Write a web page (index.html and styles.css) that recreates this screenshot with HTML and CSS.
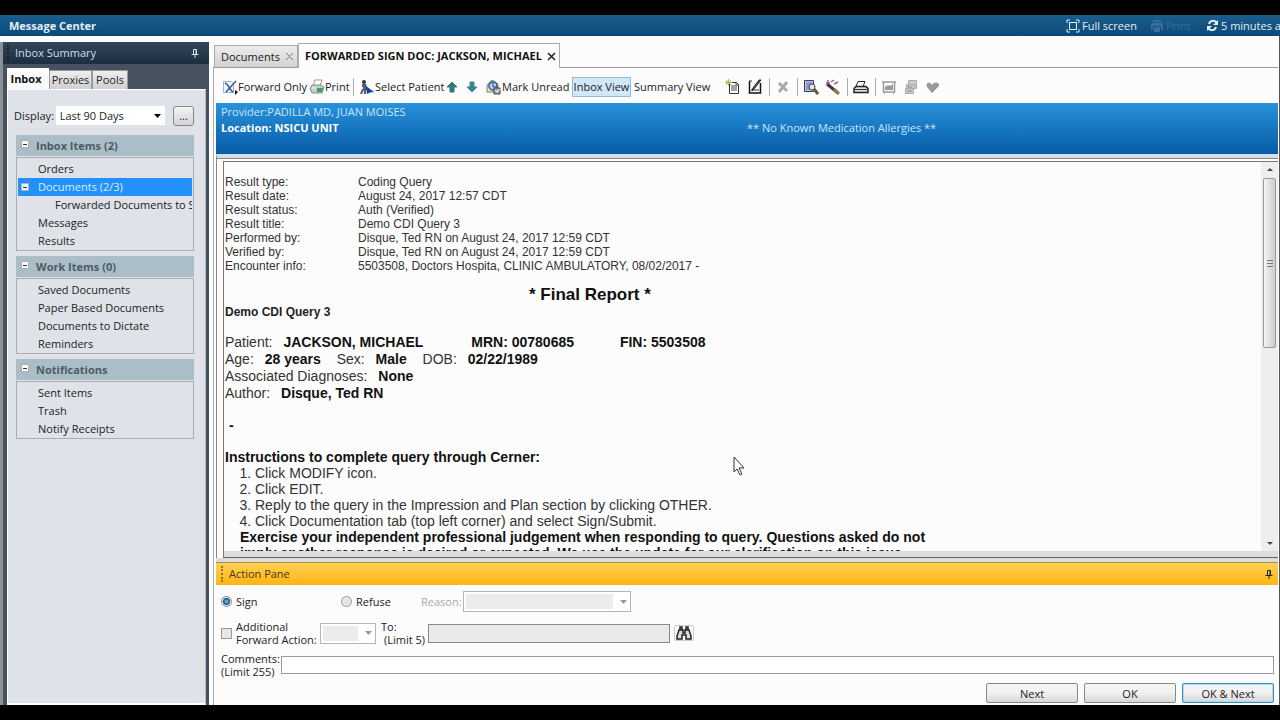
FILE: index.html
```
<!DOCTYPE html>
<html lang="en">

<head>
  <meta charset="UTF-8">
  <title>Message Center</title>
  <link rel="stylesheet" href="styles.css">
</head>

<body>

  <header class="titlebar">
    <h1>Message Center</h1>
    <button class="title-btn">
      <svg width="14" height="14" viewBox="0 0 14 14" fill="none" stroke="currentColor"><path d="M1 4V1h3M10 1h3v3M13 10v3h-3M4 13H1v-3"/><rect x="3.5" y="3.5" width="7" height="7"/></svg>
      Full screen
    </button>
    <button class="title-btn title-print" disabled>
      <svg width="14" height="14" viewBox="0 0 14 14" fill="currentColor"><path d="M3 1h8v2H3zM1 4h12v7h-2V7H3v4H1zM4 8h6v5H4z"/></svg>
      Print
    </button>
    <button class="title-btn title-refresh">
      <svg width="13" height="13" viewBox="0 0 13 13" fill="none" stroke="currentColor" stroke-width="2"><path d="M3 5c1-4 6-4 8-1M10 8c-1 4-6 4-8 1"/><path d="M12 1v5H7zM1 12V7h5z" fill="currentColor" stroke="none"/></svg>
      5 minutes ago
    </button>
  </header>

  <div class="window">

    <aside class="sidebar">
      <div class="sidebar-header">
        <span class="grip"></span>
        <h2>Inbox Summary</h2>
        <svg class="pin" width="8" height="9" viewBox="0 0 8 9" fill="none" stroke="currentColor"><path d="M2.5 5V.5h3V5M.5 5.5h7M4 6v3M5 1v4"/></svg>
      </div>
      <div class="sidebar-tabs">
        <button class="side-tab active">Inbox</button>
        <button class="side-tab">Proxies</button>
        <button class="side-tab">Pools</button>
      </div>
      <div class="sidebar-body">
        <div class="display-row">
          <label for="display">Display:</label>
          <select id="display"><option>Last 90 Days</option></select>
          <button class="more">...</button>
        </div>

        <section class="folder">
          <h3><span class="toggle"></span>Inbox Items (2)</h3>
          <ul>
            <li>Orders</li>
            <li class="selected"><span class="toggle"></span>Documents (2/3)</li>
            <li class="child">Forwarded Documents to Sign</li>
            <li>Messages</li>
            <li>Results</li>
          </ul>
        </section>

        <section class="folder">
          <h3><span class="toggle"></span>Work Items (0)</h3>
          <ul>
            <li>Saved Documents</li>
            <li>Paper Based Documents</li>
            <li>Documents to Dictate</li>
            <li>Reminders</li>
          </ul>
        </section>

        <section class="folder">
          <h3><span class="toggle"></span>Notifications</h3>
          <ul>
            <li>Sent Items</li>
            <li>Trash</li>
            <li>Notify Receipts</li>
          </ul>
        </section>
      </div>
    </aside>

    <main class="content">
      <div class="doc-tabs">
        <button class="doc-tab">Documents
          <svg width="9" height="9" viewBox="0 0 9 9" stroke="currentColor"><path d="M1 1l7 7M8 1L1 8"/></svg>
        </button>
        <button class="doc-tab active">FORWARDED SIGN DOC: JACKSON, MICHAEL
          <svg width="9" height="9" viewBox="0 0 9 9" stroke="currentColor" stroke-width="1.5"><path d="M1 1l7 7M8 1L1 8"/></svg>
        </button>
      </div>

      <div class="pane">
        <div class="toolbar">
          <button class="tool tool-forward">
            <svg width="16" height="16" viewBox="0 0 16 16"><path d="M1.5 2.5h8l2 2v9h-10z" fill="#eef4fa" stroke="#9fb2c8"/><path d="M3 4c4 1 4 7 8 9" stroke="#315a8d" stroke-width="1.5" fill="none"/><path d="M14 2L4 13" stroke="#39599b" stroke-width="1.5"/><path d="M13 11l3 2-3 3z" fill="#111"/></svg>
            Forward Only
          </button>
          <button class="tool tool-print">
            <svg width="16" height="16" viewBox="0 0 16 16"><path d="M6 1h7l-2 6H4z" fill="#fff" stroke="#999"/><path d="M3 6h9l3 2-2 6H3l-2-4z" fill="#c5cccc" stroke="#838b8b"/><path d="M8 9h6l-1 4H8z" fill="#35a557"/><path d="M3 9h4" stroke="#fff"/></svg>
            Print
          </button>
          <span class="sep"></span>
          <button class="tool tool-patient">
            <svg width="16" height="16" viewBox="0 0 16 16"><circle cx="5" cy="3" r="2" fill="#333"/><path d="M3 5h4l2 6H7v4H5v-4l-2 4H1l2-5z" fill="#555d70"/><path d="M2 8h2v2H2z" fill="#fff"/><path d="M7 7l8 6-4 .5L8 15z" fill="#173f9b"/></svg>
            Select Patient
          </button>
          <button class="tool tool-arrow" aria-label="Previous"><svg width="12" height="12" viewBox="0 0 12 12"><path d="M6 1l5 5H8v5H4V6H1z" fill="#16858b" stroke="#51686f"/></svg></button>
          <button class="tool tool-arrow" aria-label="Next item"><svg width="12" height="12" viewBox="0 0 12 12"><path d="M6 11l5-5H8V1H4v5H1z" fill="#2a8d9a" stroke="#62777e"/></svg></button>
          <button class="tool tool-unread">
            <svg width="16" height="16" viewBox="0 0 16 16"><path d="M1 6l5-5 6 4v8H1z" fill="#eee3ae" stroke="#82826c"/><circle cx="7" cy="7" r="4" fill="#b9d7f1" stroke="#3155a0" stroke-width="1.5"/><path d="M7 4v4h3" stroke="#203e8a" fill="none"/><path d="M8 9h6v6H8z" fill="#a7a7ad" stroke="#444"/><path d="M9 11l2 2 3-3" stroke="#fff" fill="none"/></svg>
            Mark Unread
          </button>
          <button class="tool tool-view pressed">Inbox View</button>
          <button class="tool tool-summary">Summary View</button>
          <button class="tool tool-icon" aria-label="New note"><svg width="16" height="16" viewBox="0 0 16 16"><path d="M4.5 3.5h7l2 2v9h-9z" fill="#fff" stroke="#333"/><path d="M6 7h6M6 9h6M6 11h6M11 3v3h3" stroke="#444" fill="none"/><path d="M1 1l5 5M6 1L1 6M3.5 0v7M0 3.5h7" stroke="#b8b155"/></svg></button>
          <button class="tool tool-icon" aria-label="Modify"><svg width="16" height="16" viewBox="0 0 16 16"><path d="M2.5 2v12h11V4" fill="none" stroke="#111" stroke-width="1.5"/><path d="M2 2h3M4 11h8" stroke="#333"/><path d="M14 1L7 10l-2 2 1-3 6-8z" fill="#446b72" stroke="#222"/></svg></button>
          <span class="sep"></span>
          <button class="tool tool-icon" aria-label="Delete" disabled><svg width="16" height="16" viewBox="0 0 16 16"><path d="M4 4l8 8M12 3L4 13" stroke="#aaa" stroke-width="3"/></svg></button>
          <span class="sep"></span>
          <button class="tool tool-icon" aria-label="Preview"><svg width="16" height="16" viewBox="0 0 16 16"><path d="M1.5 1.5h9v11h-9z" fill="#bcc2e3" stroke="#3a3d62"/><path d="M3 4h6M3 6h5M3 8h4M3 10h4" stroke="#6a6f9b"/><circle cx="9" cy="8" r="3" fill="#e4e6ee" stroke="#444"/><path d="M11 10l4 5" stroke="#6d5829" stroke-width="3"/></svg></button>
          <button class="tool tool-icon" aria-label="Wizard"><svg width="16" height="16" viewBox="0 0 16 16"><path d="M2 5l11 9" stroke="#4e3143" stroke-width="3"/><path d="M9 10l5 5" stroke="#8e804a" stroke-width="3"/><path d="M1 4h4M3 1v4M6 3l3-2M9 5l4-2" stroke="#a45987" stroke-width="1.5"/></svg></button>
          <span class="sep"></span>
          <button class="tool tool-icon" aria-label="Printer"><svg width="16" height="16" viewBox="0 0 16 16"><path d="M5 2.5h7l-2 5H3z" fill="#fff" stroke="#222"/><path d="M3 7.5h10l2 2v4H1v-4z" fill="#ddd" stroke="#222" stroke-width="1.5"/><path d="M2 10.5h12" stroke="#333"/></svg></button>
          <span class="sep"></span>
          <button class="tool tool-icon" aria-label="Chart" disabled><svg width="16" height="16" viewBox="0 0 16 16"><path d="M1 3h14M2.5 3v10h11V3" stroke="#999" stroke-width="1.5" fill="none"/><path d="M4 11V8l3-2 2 1 3-2v6z" fill="#999"/><path d="M5 13l-2 2M11 13l2 2" stroke="#aaa"/></svg></button>
          <button class="tool tool-icon" aria-label="Copies" disabled><svg width="16" height="16" viewBox="0 0 16 16"><path d="M5.5 1.5h8v8h-8zM3.5 5.5h8v4h-8zM2.5 9.5h8v5h-8z" fill="#ccc" stroke="#aaa"/><path d="M5 8h4M4 12h5" stroke="#888"/></svg></button>
          <button class="tool tool-icon" aria-label="Favorite" disabled><svg width="16" height="16" viewBox="0 0 16 16"><path d="M7 14L2 8c-2-4 3-6 5-2 2-4 8-3 7 1z" fill="#999"/></svg></button>
        </div>

        <div class="banner">
          <div>Provider:PADILLA MD, JUAN MOISES</div>
          <strong>Location: NSICU UNIT</strong>
          <span class="allergies">** No Known Medication Allergies **</span>
        </div>

        <div class="report-frame">
          <div class="report">
            <article class="report-text">
              <table class="result-info">
                <tr><th>Result type:</th><td>Coding Query</td></tr>
                <tr><th>Result date:</th><td>August 24, 2017 12:57 CDT</td></tr>
                <tr><th>Result status:</th><td>Auth (Verified)</td></tr>
                <tr><th>Result title:</th><td>Demo CDI Query 3</td></tr>
                <tr><th>Performed by:</th><td>Disque, Ted RN on August 24, 2017 12:59 CDT</td></tr>
                <tr><th>Verified by:</th><td>Disque, Ted RN on August 24, 2017 12:59 CDT</td></tr>
                <tr><th>Encounter info:</th><td>5503508, Doctors Hospita, CLINIC AMBULATORY, 08/02/2017 -</td></tr>
              </table>
              <h2>* Final Report *</h2>
              <h3>Demo CDI Query 3</h3>
              <div class="patient">
                <p><span>Patient:</span> <b class="name">JACKSON, MICHAEL</b> <b class="mrn">MRN: 00780685</b> <b>FIN: 5503508</b></p>
                <p><span>Age:</span> <b class="age">28 years</b> <span>Sex:</span> <b class="sex">Male</b> <span>DOB:</span> <b>02/22/1989</b></p>
                <p><span>Associated Diagnoses:</span> <b>None</b></p>
                <p><span>Author:</span> <b>Disque, Ted RN</b></p>
              </div>
              <p class="dash">-</p>
              <h4>Instructions to complete query through Cerner:</h4>
              <ol>
                <li>Click MODIFY icon.</li>
                <li>Click EDIT.</li>
                <li>Reply to the query in the Impression and Plan section by clicking OTHER.</li>
                <li>Click Documentation tab (top left corner) and select Sign/Submit.</li>
              </ol>
              <p class="notice">Exercise your independent professional judgement when responding to query. Questions asked do not<br>imply another response is desired or expected. We use the update for our clarification on this issue.</p>
            </article>
            <div class="scrollbar">
              <span class="scroll-up"></span>
              <span class="thumb"></span>
              <span class="scroll-down"></span>
            </div>
          </div>
        </div>

        <section class="action-pane">
          <div class="action-header">
            <span class="grip"></span>
            <h2>Action Pane</h2>
            <svg class="pin" width="8" height="9" viewBox="0 0 8 9" fill="none" stroke="currentColor"><path d="M2.5 5V.5h3V5M.5 5.5h7M4 6v3M5 1v4"/></svg>
          </div>
          <form class="action-form">
            <div class="form-row row-sign">
              <label class="sign"><input type="radio" name="action" checked>Sign</label>
              <label class="refuse"><input type="radio" name="action">Refuse</label>
              <label class="muted" for="reason">Reason:</label>
              <select id="reason" class="reason" disabled></select>
            </div>
            <div class="form-row row-forward">
              <label class="additional"><input type="checkbox"><span>Additional<br>Forward Action:</span></label>
              <select class="forward-action" aria-label="Forward action" disabled></select>
              <label class="to" for="to">To:<br><span>(Limit 5)</span></label>
              <input type="text" id="to" class="to-input" disabled>
              <button type="button" class="find" aria-label="Find recipient"><svg width="18" height="14" viewBox="0 0 18 14"><path d="M5 1h2v3H5zM11 1h2v3h-2zM4 4h4v3h2V4h4l2 6v3h-5V9H7v4H2v-3z" fill="#ddd" stroke="#222" stroke-width="1.5"/></svg></button>
            </div>
            <div class="form-row row-comments">
              <label for="comments">Comments:<br>(Limit 255)</label>
              <input type="text" id="comments">
            </div>
            <div class="buttons">
              <button type="button">Next</button>
              <button type="button">OK</button>
              <button type="button" class="default">OK &amp; Next</button>
            </div>
          </form>
        </section>
      </div>
    </main>
  </div>

  <svg class="cursor" width="12" height="20" viewBox="0 0 12 20"><path d="M1 1v15l3-3 3 6 2-1-3-6h5z" fill="#fff" stroke="#333"/></svg>

</body>

</html>
```
FILE: styles.css
```
* {
  box-sizing: border-box;
}

body {
  display: flex;
  flex-direction: column;
  height: 100vh;
  margin: 0;
  padding: 15px 0;
  overflow: hidden;
  background: #000;
  color: #222;
  font: 11px/18px "Open Sans", "Noto Sans", sans-serif;
}

h1, h2, h3, h4, p, ul, ol {
  margin: 0;
  padding: 0;
}

button, input, select {
  margin: 0;
  color: inherit;
  font: inherit;
}

button {
  padding: 0;
  border: 0;
  background: none;
  white-space: nowrap;
}

svg {
  flex: none;
}

.titlebar {
  display: flex;
  align-items: center;
  height: 21px;
  flex: none;
  padding-left: 9px;
  background: linear-gradient(#1b5d8c, #0a4a79);
  color: #e4eff7;
  overflow: hidden;
}

.titlebar h1 {
  margin-right: auto;
  font-size: 11px;
}

.title-btn {
  display: flex;
  align-items: center;
  gap: 2px;
  width: 84px;
  height: 18px;
  flex: none;
}

.title-print {
  width: 56px;
  color: #376f99;
}

.title-refresh {
  width: 74px;
}

.window {
  display: flex;
  flex: 1;
  min-height: 0;
  padding: 6px 1px 0 0;
  background: #fcfcfc;
  border-right: 1px solid #555;
}

/* Left panel */
.sidebar {
  display: flex;
  flex-direction: column;
  width: 209px;
  flex: none;
  border-left: 3px solid #8b9097;
  background: #46525f;
}

.grip {
  width: 3px;
  height: 16px;
  border-left: 2px dotted #16222e;
}

.sidebar-header {
  display: flex;
  align-items: center;
  gap: 5px;
  height: 22px;
  padding: 0 10px 0 4px;
  background: linear-gradient(#32475b, #1c2e40);
  color: #d5dde5;
}

.sidebar-header h2 {
  flex: 1;
  font-size: 11px;
  font-weight: normal;
}

.sidebar-tabs {
  display: flex;
  align-items: flex-end;
  height: 25px;
  padding-left: 4px;
}

.side-tab {
  height: 19px;
  width: 43px;
  border: 1px solid #999;
  border-bottom: 0;
  background: linear-gradient(#eee, #cfcfd3);
}

.side-tab:last-child {
  width: 36px;
}

.side-tab.active {
  height: 21px;
  width: 42px;
  padding-right: 4px;
  border-color: #fff;
  background: #fafafa;
  color: #111;
  font-weight: bold;
}

.sidebar-body {
  flex: 1;
  min-width: 0;
  margin: 0 3px 0 4px;
  padding: 15px 11px 0 8px;
  border: 1px solid #fff;
  border-right-color: #b9bdc3;
  border-bottom-width: 2px;
  background: #dfe2e8;
}

.display-row {
  display: flex;
  align-items: center;
  height: 21px;
  margin-bottom: 9px;
}

.display-row label {
  width: 42px;
  margin-left: -2px;
}

select {
  appearance: none;
  border: 1px solid #b5b5b5;
  border-radius: 0;
}

.display-row select {
  width: 110px;
  height: 19px;
  padding: 0 4px;
  border: 0;
  background: #fff url("data:image/svg+xml,%3Csvg xmlns='http://www.w3.org/2000/svg' width='7' height='4'%3E%3Cpath d='M0 0h7L3.5 4z'/%3E%3C/svg%3E") no-repeat right 4px center;
}

.more {
  width: 21px;
  height: 20px;
  flex: none;
  margin-left: 8px;
  border: 1px solid #888;
  border-radius: 3px;
  background: linear-gradient(#f4f4f4, #d2d4d8);
  line-height: 12px;
}

.folder {
  margin-bottom: 5px;
}

.folder h3 {
  position: relative;
  height: 21px;
  margin-bottom: 1px;
  padding-left: 20px;
  background: #abbec8;
  color: #4d5b63;
  font-size: 11px;
  line-height: 21px;
}

.folder ul {
  padding: 2px 1px 0;
  border: 1px solid #aaaeb4;
  list-style: none;
}

.folder li {
  position: relative;
  height: 18px;
  padding-left: 20px;
  overflow: hidden;
  line-height: 18px;
  white-space: nowrap;
}

.folder .child {
  padding-left: 37px;
}

.folder .selected {
  background: #2490fc;
  color: #d9efff;
}

.toggle {
  position: absolute;
  top: 5px;
  left: 5px;
  width: 8px;
  height: 8px;
  border: 1px solid #a9b2b8;
  background: linear-gradient(#333, #333) center / 4px 1px no-repeat #fff;
}

.selected .toggle {
  left: 3px;
}

/* Document tabs and toolbar */
.content {
  display: flex;
  flex-direction: column;
  flex: 1;
  min-width: 0;
  padding-left: 4px;
}

.doc-tabs {
  display: flex;
  align-items: flex-end;
  height: 26px;
  padding-left: 1px;
  border-bottom: 1px solid #999;
}

.doc-tab {
  display: flex;
  align-items: center;
  justify-content: space-between;
  width: 84px;
  height: 22px;
  padding: 0 3px 0 6px;
  border: 1px solid #aaa;
  border-bottom: 0;
  background: linear-gradient(#ededed, #d2d2d2);
}

.doc-tab svg {
  color: #777;
}

.doc-tab.active {
  width: 262px;
  height: 25px;
  margin-bottom: -1px;
  background: #fcfcfc;
  color: #111;
  font-weight: bold;
}

.doc-tab.active svg {
  color: #222;
}

.pane {
  display: flex;
  flex-direction: column;
  flex: 1;
  min-height: 0;
  padding-left: 2px;
  border-left: 1px solid #aaa;
}

.toolbar {
  display: flex;
  align-items: center;
  height: 35px;
  flex: none;
  padding: 2px 0 0 6px;
}

.tool {
  display: flex;
  align-items: center;
  height: 20px;
  flex: none;
}

.tool-forward {
  width: 87px;
}

.tool-print {
  width: 44px;
}

.tool-patient {
  width: 87px;
}

.tool-arrow {
  width: 20px;
}

.tool-unread {
  width: 86px;
}

.tool-view {
  justify-content: center;
  width: 59px;
}

.pressed {
  border: 1px solid #90bad5;
  background: #cfe7f7;
}

.tool-summary {
  width: 94px;
  padding-left: 3px;
}

.tool-icon {
  width: 22px;
}

.sep {
  width: 1px;
  height: 18px;
  margin-right: 5px;
  background: #aaa;
}

.banner {
  position: relative;
  height: 51px;
  flex: none;
  padding: 1px 0 0 5px;
  background: linear-gradient(#2892db, #075ba6);
  color: #cae6fa;
  line-height: 16px;
}

.banner strong {
  color: #fff;
}

.allergies {
  position: absolute;
  top: 17px;
  left: 50%;
}

/* Report */
.report-frame {
  display: flex;
  flex: 1;
  min-height: 0;
  padding: 3px 0 0 6px;
  border-top: 4px solid #d5dde5;
  border-left: 1px solid #888;
  box-shadow: inset 0 1px #888;
}

.report {
  display: flex;
  flex: 1;
  min-width: 0;
  border: 1px solid #777;
  border-right: 0;
  border-bottom: 1px solid #666;
  box-shadow: inset 0 -6px #ddd;
  padding-bottom: 6px;
}

.report-text {
  flex: 1;
  min-width: 0;
  padding: 13px 0 0 1px;
  overflow: hidden;
  color: #333;
  font: 14px/16px "Liberation Sans", Arial, sans-serif;
}

.result-info {
  border-spacing: 0;
  font-size: 12px;
  line-height: 14px;
}

.result-info th {
  width: 133px;
  padding: 0;
  font-weight: normal;
  text-align: left;
}

.result-info td {
  padding: 0;
}

.report-text h2 {
  margin: 12px 0 0 304px;
  color: #111;
  font-size: 17px;
  line-height: 20px;
}

.report-text h3 {
  color: #222;
  font-size: 12px;
  line-height: 14px;
}

.patient {
  margin-top: 15px;
  line-height: 17px;
}

.patient span {
  margin-right: 7px;
}

.patient b,
.report-text h4,
.notice,
.dash {
  color: #111;
}

.name {
  margin-right: 44px;
}

.mrn {
  margin-right: 42px;
}

.age,
.sex {
  margin-right: 12px;
}

.dash {
  margin: 15px 0 16px 4px;
  font-weight: bold;
}

.report-text h4 {
  font-size: 14px;
  line-height: 16px;
}

.report-text ol {
  padding-left: 30px;
}

.notice {
  padding-left: 15px;
  font-weight: bold;
  white-space: nowrap;
}

.scrollbar {
  display: flex;
  flex-direction: column;
  width: 17px;
  padding: 6px 2px;
  background: #eee;
}

.scroll-up,
.scroll-down {
  align-self: center;
  border: 3px solid transparent;
  border-top: 0;
  border-bottom-color: #444;
}

.thumb {
  height: 170px;
  margin: 7px 0 auto;
  border: 1px solid #999;
  border-radius: 2px;
  background:
    repeating-linear-gradient(#777 0 1px, transparent 1px 3px) center / 6px 7px no-repeat,
    linear-gradient(90deg, #f5f5f5, #ccc);
}

.scroll-down {
  border: 3px solid transparent;
  border-bottom: 0;
  border-top-color: #444;
}

/* Action pane */
.action-pane {
  flex: none;
  border-top: 4px solid #ddd;
}

.action-header {
  display: flex;
  align-items: center;
  gap: 5px;
  height: 23px;
  padding: 0 5px;
  border-top: 1px solid #a98d48;
  background: linear-gradient(#ffd052, #ffb414);
  color: #4a3512;
}

.action-header .grip {
  border-color: #9c701a;
}

.action-header h2 {
  flex: 1;
  font-size: 11px;
  font-weight: normal;
}

.action-header .pin {
  color: #222;
}

.action-form {
  padding: 5px 4px 2px 5px;
  line-height: 13px;
}

.form-row {
  display: flex;
  align-items: center;
}

.form-row label {
  display: flex;
  flex: none;
  align-items: center;
  white-space: nowrap;
}

.form-row input[type="radio"],
.form-row input[type="checkbox"] {
  width: 11px;
  height: 11px;
  flex: none;
  margin-right: 4px;
}

.form-row input[type="radio"],
.form-row input[type="checkbox"] {
  appearance: none;
  border: 1px solid #999;
  background: #e6e6e6;
}

.form-row input[type="radio"] {
  border-radius: 50%;
}

.form-row input[type="radio"]:checked {
  border-color: #7b8794;
  background: radial-gradient(circle, #59b4e0 0 1px, #174a73 3px, #e8edf2 4px);
}

.row-sign {
  height: 23px;
}

.sign {
  width: 120px;
}

.refuse {
  width: 80px;
}

.muted {
  width: 42px;
  color: #aaa;
}

.reason {
  width: 168px;
  height: 21px;
}

select:disabled {
  background:
    url("data:image/svg+xml,%3Csvg xmlns='http://www.w3.org/2000/svg' width='7' height='4'%3E%3Cpath d='M0 0h7L3.5 4z' fill='%23999'/%3E%3C/svg%3E") no-repeat right 3px center,
    linear-gradient(#ececec, #ececec) no-repeat 2px 2px / calc(100% - 19px) calc(100% - 4px),
    #fff;
  opacity: 1;
}

.row-forward {
  height: 28px;
  margin-top: 6px;
}

.additional {
  width: 99px;
}

.forward-action {
  width: 56px;
  height: 21px;
}

.form-row .to {
  display: block;
  width: 47px;
  margin-left: 5px;
}

.to span {
  padding-left: 3px;
}

.to-input {
  width: 242px;
  height: 19px;
  border: 1px solid #888;
  background: #eaeaea;
}

.find {
  width: 20px;
  height: 16px;
  margin-left: 4px;
  border: 1px solid #ccc;
  border-radius: 2px;
  line-height: 0;
}

.row-comments {
  height: 28px;
  margin-top: 4px;
}

.row-comments label {
  width: 60px;
}

.row-comments input {
  flex: 1;
  min-width: 0;
  height: 18px;
  border: 1px solid #999;
  background: #fff;
}

.buttons {
  display: flex;
  justify-content: flex-end;
  gap: 6px;
  margin-top: 4px;
}

.buttons button {
  width: 92px;
  height: 20px;
  border: 1px solid #888;
  border-radius: 2px;
  background: linear-gradient(#f3f3f3 45%, #d7d7d7);
}

.buttons .default {
  border-color: #3f8bb7;
  box-shadow: inset 0 0 0 1px #a6dcf5;
}

.cursor {
  position: absolute;
  top: 456px;
  left: 733px;
}
```
